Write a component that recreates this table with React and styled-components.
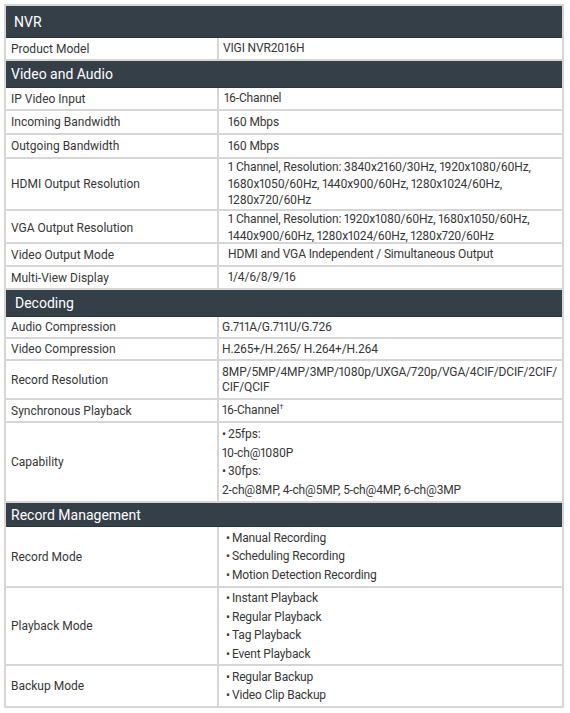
import React from "react";
import styled, { createGlobalStyle } from "styled-components";

const Global = createGlobalStyle`
  html, body { margin: 0; padding: 0; background: #ffffff; }
  body { font-family: Roboto, "Liberation Sans", Arial, sans-serif; }
`;

const Table = styled.div`
  margin: 4px 0 0 4px;
  width: 560px;
  box-sizing: border-box;
  border: 2px solid #d5d5d5;
  border-bottom: none;
  display: flex;
  flex-direction: column;
`;

const SectionHeader = styled.div`
  box-sizing: border-box;
  height: ${(p) => p.$h}px;
  background: #353f48;
  color: #ffffff;
  font-size: 14px;
  display: flex;
  align-items: center;
  padding-left: ${(p) => p.$indent ?? 5}px;
  border-bottom: 1px solid #2c343b;
`;

const Row = styled.div`
  box-sizing: border-box;
  height: ${(p) => p.$h}px;
  display: grid;
  grid-template-columns: 211px 1fr;
  border-bottom: 2px solid #d5d5d5;
  color: #363636;
  font-size: 12px;
`;

const Label = styled.div`
  display: flex;
  align-items: center;
  padding-left: 5px;
`;

const Value = styled.div`
  display: flex;
  flex-direction: column;
  justify-content: center;
  border-left: 2px solid #d5d5d5;
  padding-left: ${(p) => p.$indent ?? 5}px;
  line-height: ${(p) => p.$lh ?? 16.5}px;
  font-feature-settings: "pnum" 1;
  letter-spacing: -0.15px;
`;

const Line = styled.span`
  display: block;
  white-space: nowrap;
`;

const Bullet = styled.span`
  display: block;
  white-space: nowrap;
  line-height: 18.5px;
  &::before {
    content: "•";
    margin-right: 2px;
  }
`;

const Plain = styled.span`
  display: block;
  white-space: nowrap;
  line-height: 18.5px;
`;

const Dagger = styled.sup`
  font-size: 7px;
  vertical-align: 5px;
  line-height: 0;
`;

export default function App() {
  return (
    <>
      <Global />
      <Table>
        <SectionHeader $h={32} $indent={8}>NVR</SectionHeader>
        <Row $h={23}>
          <Label>Product Model</Label>
          <Value $indent={4}>VIGI NVR2016H</Value>
        </Row>

        <SectionHeader $h={27}>Video and Audio</SectionHeader>
        <Row $h={23}>
          <Label>IP Video Input</Label>
          <Value $indent={5}>16-Channel</Value>
        </Row>
        <Row $h={24}>
          <Label>Incoming Bandwidth</Label>
          <Value $indent={9}>160 Mbps</Value>
        </Row>
        <Row $h={24}>
          <Label>Outgoing Bandwidth</Label>
          <Value $indent={9}>160 Mbps</Value>
        </Row>
        <Row $h={52}>
          <Label>HDMI Output Resolution</Label>
          <Value $indent={9}>
            <Line>1 Channel, Resolution: 3840x2160/30Hz, 1920x1080/60Hz,</Line>
            <Line>1680x1050/60Hz, 1440x900/60Hz, 1280x1024/60Hz,</Line>
            <Line>1280x720/60Hz</Line>
          </Value>
        </Row>
        <Row $h={33}>
          <Label>VGA Output Resolution</Label>
          <Value $indent={9}>
            <Line>1 Channel, Resolution: 1920x1080/60Hz, 1680x1050/60Hz,</Line>
            <Line>1440x900/60Hz, 1280x1024/60Hz, 1280x720/60Hz</Line>
          </Value>
        </Row>
        <Row $h={23}>
          <Label>Video Output Mode</Label>
          <Value $indent={9}>HDMI and VGA Independent / Simultaneous Output</Value>
        </Row>
        <Row $h={23}>
          <Label>Multi-View Display</Label>
          <Value $indent={9}>1/4/6/8/9/16</Value>
        </Row>

        <SectionHeader $h={27} $indent={9}>Decoding</SectionHeader>
        <Row $h={22}>
          <Label>Audio Compression</Label>
          <Value $indent={3}>G.711A/G.711U/G.726</Value>
        </Row>
        <Row $h={22}>
          <Label>Video Compression</Label>
          <Value $indent={3}>H.265+/H.265/ H.264+/H.264</Value>
        </Row>
        <Row $h={39}>
          <Label>Record Resolution</Label>
          <Value $indent={3} $lh={15}>
            <Line>8MP/5MP/4MP/3MP/1080p/UXGA/720p/VGA/4CIF/DCIF/2CIF/</Line>
            <Line>CIF/QCIF</Line>
          </Value>
        </Row>
        <Row $h={23}>
          <Label>Synchronous Playback</Label>
          <Value $indent={3}>
            <Line>
              16-Channel<Dagger>†</Dagger>
            </Line>
          </Value>
        </Row>
        <Row $h={80}>
          <Label>Capability</Label>
          <Value $indent={3}>
            <Bullet>25fps:</Bullet>
            <Plain>10-ch@1080P</Plain>
            <Bullet>30fps:</Bullet>
            <Plain>2-ch@8MP, 4-ch@5MP, 5-ch@4MP, 6-ch@3MP</Plain>
          </Value>
        </Row>

        <SectionHeader $h={24}>Record Management</SectionHeader>
        <Row $h={61}>
          <Label>Record Mode</Label>
          <Value $indent={7}>
            <Bullet>Manual Recording</Bullet>
            <Bullet>Scheduling Recording</Bullet>
            <Bullet>Motion Detection Recording</Bullet>
          </Value>
        </Row>
        <Row $h={78}>
          <Label>Playback Mode</Label>
          <Value $indent={7}>
            <Bullet>Instant Playback</Bullet>
            <Bullet>Regular Playback</Bullet>
            <Bullet>Tag Playback</Bullet>
            <Bullet>Event Playback</Bullet>
          </Value>
        </Row>
        <Row $h={42}>
          <Label>Backup Mode</Label>
          <Value $indent={7}>
            <Bullet>Regular Backup</Bullet>
            <Bullet>Video Clip Backup</Bullet>
          </Value>
        </Row>
      </Table>
    </>
  );
}
